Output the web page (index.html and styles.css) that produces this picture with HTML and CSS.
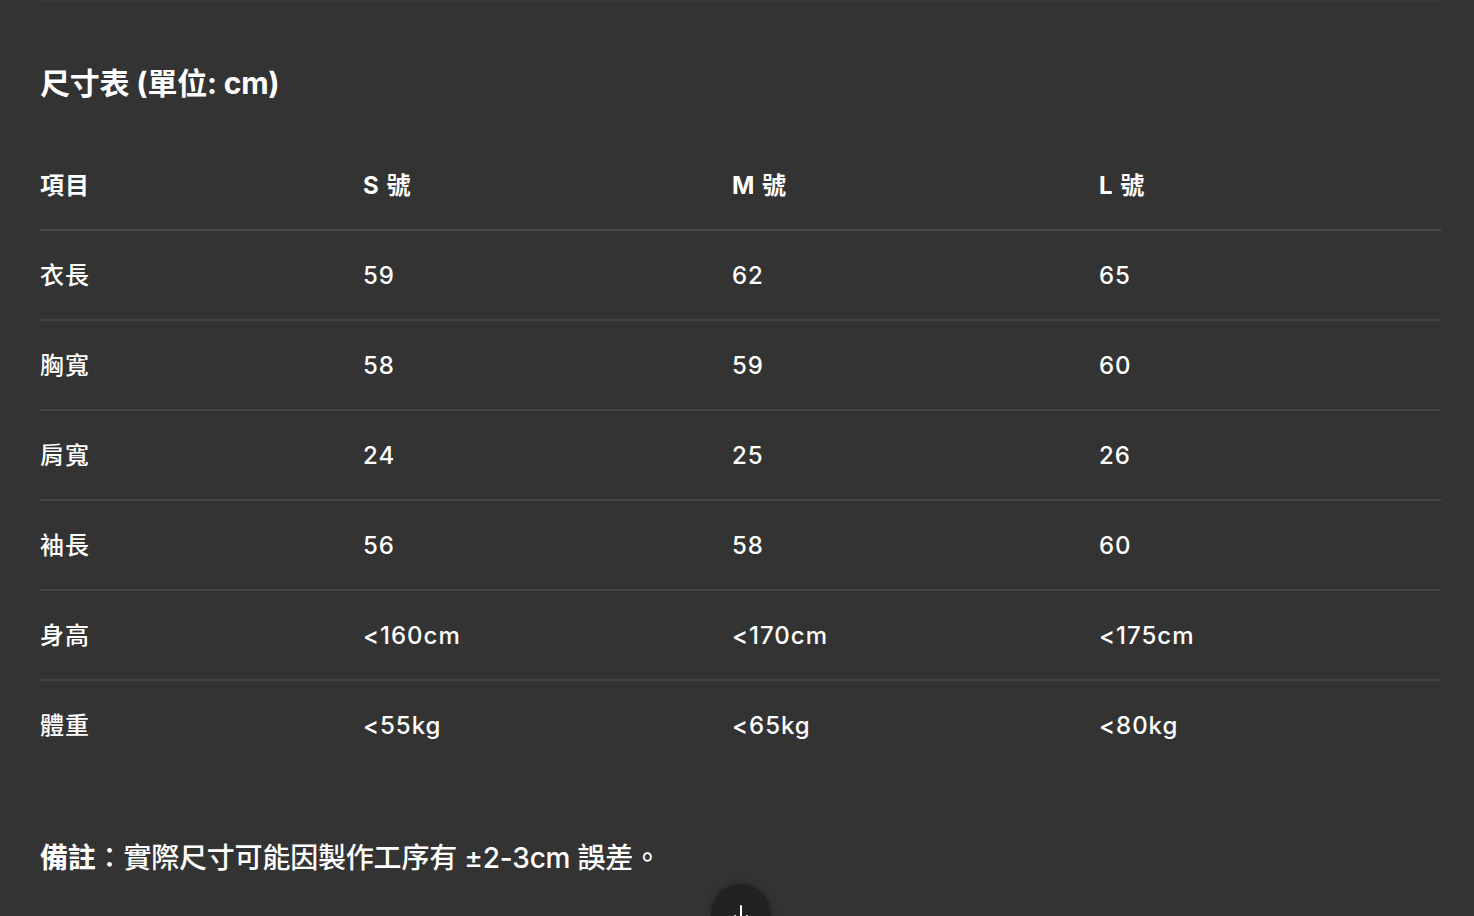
FILE: index.html
```html
<!DOCTYPE html>
<html lang="zh-Hant">
<head>
<meta charset="utf-8">
<title>尺寸表</title>
<link rel="stylesheet" href="styles.css">
</head>
<body>
<div class="page">
  <div class="divider"></div>
  <h2 class="title">尺寸表 (單位: cm)</h2>
  <table class="size-table">
    <colgroup>
      <col class="c1"><col class="c2"><col class="c3"><col class="c4">
    </colgroup>
    <thead>
      <tr><th>項目</th><th>S 號</th><th>M 號</th><th>L 號</th></tr>
    </thead>
    <tbody>
      <tr><td>衣長</td><td>59</td><td>62</td><td>65</td></tr>
      <tr><td>胸寬</td><td>58</td><td>59</td><td>60</td></tr>
      <tr><td>肩寬</td><td>24</td><td>25</td><td>26</td></tr>
      <tr><td>袖長</td><td>56</td><td>58</td><td>60</td></tr>
      <tr><td>身高</td><td>&lt;160cm</td><td>&lt;170cm</td><td>&lt;175cm</td></tr>
      <tr><td>體重</td><td>&lt;55kg</td><td>&lt;65kg</td><td>&lt;80kg</td></tr>
    </tbody>
  </table>
  <p class="note"><strong>備註</strong>：實際尺寸可能因製作工序有 ±2-3cm 誤差。</p>
</div>
<button class="fab" aria-label="scroll">
  <svg width="24" height="24" viewBox="0 0 24 24" fill="none" stroke="#fff" stroke-width="2" stroke-linecap="round" stroke-linejoin="round"><path d="M12 4v16"/><path d="M6 14l6 6 6-6"/></svg>
</button>
</body>
</html>
```
FILE: styles.css
```css
html, body {
  margin: 0;
  padding: 0;
  background: #333333;
  height: 100%;
  overflow: hidden;
}
body {
  font-family: Inter, "Noto Sans CJK TC", sans-serif;
  color: #ffffff;
}
.page {
  padding: 0 32px 0 40px;
}
.divider {
  height: 2px;
  background: #3b3b3b;
}
.title {
  margin: 60px 0 37px;
  font-size: 30px;
  line-height: 42px;
  font-weight: 700;
  letter-spacing: -0.2px;
}
.size-table {
  border-collapse: collapse;
  table-layout: fixed;
  width: 1401px;
}
.c1 { width: 323px; }
.c2 { width: 369px; }
.c3 { width: 367px; }
.c4 { width: 342px; }
.size-table th,
.size-table td {
  padding: 2px 0 0;
  height: 86px;
  text-align: left;
  vertical-align: middle;
  font-size: 24px;
  line-height: 32px;
  letter-spacing: 1px;
}
.size-table th {
  font-weight: 700;
  border-bottom: 2px solid #4b4b4b;
}
.size-table td {
  font-weight: 500;
  border-bottom: 2px solid #444444;
}
.size-table tbody tr:last-child td {
  border-bottom: none;
}
.note {
  margin: 68px 0 0;
  font-size: 28px;
  line-height: 42px;
  font-weight: 500;
  letter-spacing: -0.2px;
}
.note strong {
  font-weight: 700;
}
.fab {
  position: fixed;
  left: 711px;
  top: 884px;
  width: 60px;
  height: 60px;
  border-radius: 50%;
  border: none;
  background: #222222;
  box-shadow: 0 0 6px rgba(0, 0, 0, 0.25);
  padding: 0;
  display: flex;
  align-items: flex-start;
  justify-content: center;
}
.fab svg {
  margin-top: 18px;
}
```
